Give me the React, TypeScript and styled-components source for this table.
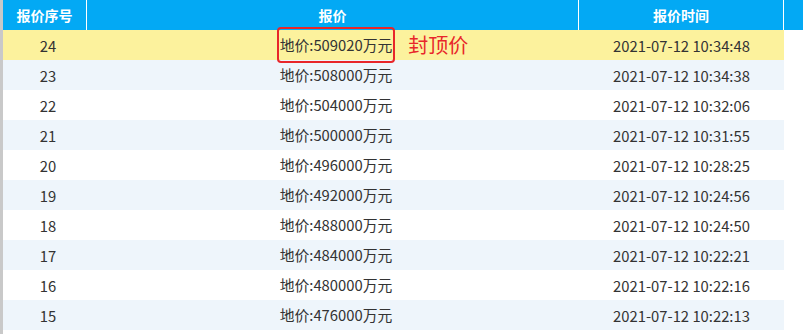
import * as React from 'react';
import styled, { createGlobalStyle } from 'styled-components';

interface IBid {
  seq: number;
  price: number;
  time: string;
}

const bids: IBid[] = [
  { seq: 24, price: 509020, time: '2021-07-12 10:34:48' },
  { seq: 23, price: 508000, time: '2021-07-12 10:34:38' },
  { seq: 22, price: 504000, time: '2021-07-12 10:32:06' },
  { seq: 21, price: 500000, time: '2021-07-12 10:31:55' },
  { seq: 20, price: 496000, time: '2021-07-12 10:28:25' },
  { seq: 19, price: 492000, time: '2021-07-12 10:24:56' },
  { seq: 18, price: 488000, time: '2021-07-12 10:24:50' },
  { seq: 17, price: 484000, time: '2021-07-12 10:22:21' },
  { seq: 16, price: 480000, time: '2021-07-12 10:22:16' },
  { seq: 15, price: 476000, time: '2021-07-12 10:22:13' },
];

const headBlue = '#03a9f4';
const fontStack = `"Noto Sans CJK SC", "Liberation Sans", sans-serif`;

const GlobalStyle = createGlobalStyle`
  html, body {
    margin: 0;
    padding: 0;
    background: #fff;
  }
  body {
    font-family: ${fontStack};
    overflow: hidden;
  }
`;

const Page = styled.div`
  display: flex;
  width: 803px;
  height: 334px;
  overflow: hidden;
`;

const Gutter = styled.div`
  width: 3px;
  flex: none;
  background: #c9c9c9;
`;

const Table = styled.div`
  flex: 1;
  display: flex;
  flex-direction: column;
`;

const HeadRow = styled.div`
  display: flex;
  height: 30px;
  background: ${headBlue};
`;

const HeadCell = styled.div<{ w: number }>`
  width: ${(p) => p.w}px;
  flex: none;
  display: flex;
  align-items: center;
  justify-content: center;
  box-sizing: border-box;
  border-right: 1px solid #fff;
  color: #fff;
  font-size: 14px;
  font-weight: 700;
`;

const HeadFiller = styled.div`
  flex: 1;
`;

const Row = styled.div<{ tone: 'top' | 'odd' | 'even' }>`
  display: flex;
  height: 30px;
  width: 781px;
  background: ${(p) =>
    p.tone === 'top' ? '#fcf29d' : p.tone === 'odd' ? '#eef5fb' : '#fff'};
`;

const Cell = styled.div<{ w: number }>`
  width: ${(p) => p.w}px;
  flex: none;
  display: flex;
  align-items: center;
  justify-content: center;
  color: #333;
  font-size: 14.8px;
`;

const Value = styled.span`
  position: relative;
  line-height: 20px;
`;

const Frame = styled.span`
  position: absolute;
  top: -8px;
  bottom: -8px;
  left: -3px;
  right: -3px;
  border: 2px solid #e8262a;
  border-radius: 4px;
`;

const Tag = styled.span`
  position: absolute;
  left: calc(100% + 16px);
  top: 50%;
  transform: translateY(-50%);
  white-space: nowrap;
  color: #e8262a;
  font-size: 20px;
  line-height: 24px;
`;

const cols = [84, 492, 205];

const App: React.FC = () => (
  <Page>
    <GlobalStyle />
    <Gutter />
    <Table>
      <HeadRow>
        <HeadCell w={cols[0]}>报价序号</HeadCell>
        <HeadCell w={cols[1]}>报价</HeadCell>
        <HeadCell w={cols[2]}>报价时间</HeadCell>
        <HeadFiller />
      </HeadRow>
      {bids.map((bid, i) => (
        <Row key={bid.seq} tone={i === 0 ? 'top' : i % 2 === 1 ? 'odd' : 'even'}>
          <Cell w={cols[0] + 6}>{bid.seq}</Cell>
          <Cell w={cols[1] - 6}>
            <Value>
              地价:{bid.price}万元
              {i === 0 && (
                <>
                  <Frame />
                  <Tag>封顶价</Tag>
                </>
              )}
            </Value>
          </Cell>
          <Cell w={cols[2]}>{bid.time}</Cell>
        </Row>
      ))}
    </Table>
  </Page>
);

export default App;
